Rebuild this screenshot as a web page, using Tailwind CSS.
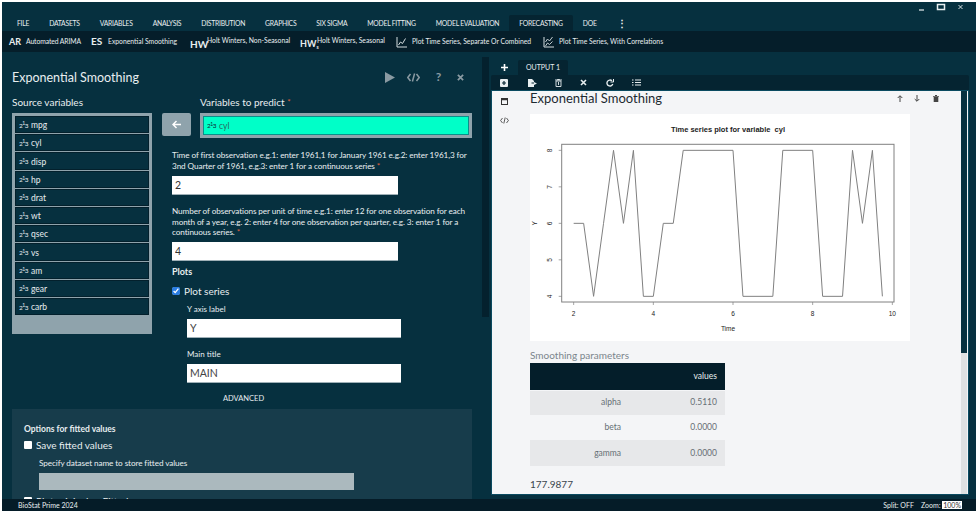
<!DOCTYPE html>
<html lang="en">
<head>
  <meta charset="UTF-8" />
  <title>BioStat Prime</title>
  <script src="https://cdn.jsdelivr.net/npm/@tailwindcss/browser@4"></script>
</head>
<body class="bg-white w-[976px] h-[513px] overflow-hidden font-['Lato','Noto_Sans',sans-serif]">
<div class="ml-[2px] mt-[2px] h-[509px] w-[974px] flex flex-col bg-[#06303f] text-[#e8eef0]">

  <!-- window controls -->
  <div class="h-[13px] flex justify-end items-start">
    <svg class="w-[60px] h-[13px]" viewBox="0 0 60 13" fill="none" stroke="#e8eef0">
      <path d="M3 8h5" stroke-width="1.2"/>
      <rect x="21.5" y="2.5" width="7" height="5" stroke-width="1.5"/>
      <path d="M42.5 3l4 4M46.5 3l-4 4" stroke-width="0.9"/>
    </svg>
  </div>

  <!-- menu -->
  <div class="h-[16px] flex pl-[5px] text-[6.8px] tracking-[-0.25px] uppercase items-stretch">
    <div class="px-[10px] flex items-center">File</div>
    <div class="px-[10px] flex items-center">Datasets</div>
    <div class="px-[10px] flex items-center">Variables</div>
    <div class="px-[10px] flex items-center">Analysis</div>
    <div class="px-[10px] flex items-center">Distribution</div>
    <div class="px-[10px] flex items-center">Graphics</div>
    <div class="px-[10px] flex items-center">Six Sigma</div>
    <div class="px-[10px] flex items-center">Model Fitting</div>
    <div class="px-[10px] flex items-center">Model Evaluation</div>
    <div class="px-[10px] flex items-center bg-[#052431] rounded-t-[2px]">Forecasting</div>
    <div class="px-[10px] flex items-center">DOE</div>
    <div class="px-[10px] flex items-center font-bold text-[10px]">⋮</div>
  </div>

  <!-- ribbon -->
  <div class="h-[21px] bg-[#051e2a] flex items-center pl-[7px] text-[6.8px] whitespace-nowrap">
    <b class="text-[9px] w-[17px]">AR</b>
    <span class="w-[65px] tracking-[-0.1px]">Automated ARIMA</span>
    <b class="text-[10px] w-[17px]">ES</b>
    <span class="w-[82px]">Exponential Smoothing</span>
    <b class="text-[10px] w-[17px] mt-[5px]">HW</b>
    <span class="w-[93px] mb-[2px]">Holt Winters, Non-Seasonal</span>
    <b class="text-[9px] w-[17px] mt-[5px]">HW<sub class="text-[5px]">s</sub></b>
    <span class="w-[79px] mb-[2px]">Holt Winters, Seasonal</span>
    <svg class="w-[11px] h-[12px] mr-[5px]" viewBox="0 0 11 12" fill="none" stroke="#d5dde0"><path d="M1 1v10h10" stroke-width="1"/><path d="M2.5 9l2-3 2 1.5 3-5" stroke-width="1"/></svg>
    <span class="w-[131px]">Plot Time Series, Separate Or Combined</span>
    <svg class="w-[11px] h-[12px] mr-[5px]" viewBox="0 0 11 12" fill="none" stroke="#d5dde0"><path d="M1 1v10h10" stroke-width="1"/><path d="M2.5 6l2-3 2 2 3-4M2.5 10l2-3 2 1.5 3-3" stroke-width="0.9"/></svg>
    <span>Plot Time Series, With Correlations</span>
  </div>

  <!-- main -->
  <div class="flex-1 flex min-h-0">

    <!-- left pane -->
    <div class="w-[480px] shrink-0 overflow-hidden pl-[10px] pt-[16px]">
      <div class="flex items-center w-[455px] h-[18px]">
        <h1 class="text-[12.5px] leading-[18px] pt-[1px]">Exponential Smoothing</h1>
        <div class="ml-auto flex items-center text-[#8a9aa2] pr-[3px]">
          <svg class="w-[10px] h-[11px]" viewBox="0 0 10 11" fill="currentColor"><path d="M0 0l10 5.5L0 11z"/></svg>
          <svg class="ml-[12px] w-[13px] h-[9px]" viewBox="0 0 13 9" fill="none" stroke="currentColor" stroke-width="1.5"><path d="M3.5 1L.8 4.5 3.5 8M9.5 1l2.7 3.5L9.5 8M7.6.5L5.4 8.5"/></svg>
          <span class="ml-[15px] text-[12px] font-bold leading-none w-[7px] text-center">?</span>
          <svg class="ml-[15px] w-[7px] h-[7px]" viewBox="0 0 8 8" fill="none" stroke="currentColor" stroke-width="2"><path d="M1 1l6 6M7 1L1 7"/></svg>
        </div>
      </div>

      <div class="flex mt-[10px]">
        <!-- source list -->
        <div class="w-[140px] shrink-0">
          <div class="text-[10px] h-[13px] leading-[13px]">Source variables</div>
          <div class="mt-[4px] h-[221px] bg-[#8fa3ac] p-[3px] flex flex-col gap-[1px] text-[8.5px]">
            <div class="h-[17.2px] shrink-0 bg-[#06303f] border border-[#03202c] flex items-center pl-[3px] pt-[2px]"><span class="text-[6.5px] tracking-[-0.5px] mr-[3px]">2<sup class="text-[5px]">1</sup>3</span>mpg</div>
            <div class="h-[17.2px] shrink-0 bg-[#06303f] border border-[#03202c] flex items-center pl-[3px] pt-[2px]"><span class="text-[6.5px] tracking-[-0.5px] mr-[3px]">2<sup class="text-[5px]">1</sup>3</span>cyl</div>
            <div class="h-[17.2px] shrink-0 bg-[#06303f] border border-[#03202c] flex items-center pl-[3px] pt-[2px]"><span class="text-[6.5px] tracking-[-0.5px] mr-[3px]">2<sup class="text-[5px]">1</sup>3</span>disp</div>
            <div class="h-[17.2px] shrink-0 bg-[#06303f] border border-[#03202c] flex items-center pl-[3px] pt-[2px]"><span class="text-[6.5px] tracking-[-0.5px] mr-[3px]">2<sup class="text-[5px]">1</sup>3</span>hp</div>
            <div class="h-[17.2px] shrink-0 bg-[#06303f] border border-[#03202c] flex items-center pl-[3px] pt-[2px]"><span class="text-[6.5px] tracking-[-0.5px] mr-[3px]">2<sup class="text-[5px]">1</sup>3</span>drat</div>
            <div class="h-[17.2px] shrink-0 bg-[#06303f] border border-[#03202c] flex items-center pl-[3px] pt-[2px]"><span class="text-[6.5px] tracking-[-0.5px] mr-[3px]">2<sup class="text-[5px]">1</sup>3</span>wt</div>
            <div class="h-[17.2px] shrink-0 bg-[#06303f] border border-[#03202c] flex items-center pl-[3px] pt-[2px]"><span class="text-[6.5px] tracking-[-0.5px] mr-[3px]">2<sup class="text-[5px]">1</sup>3</span>qsec</div>
            <div class="h-[17.2px] shrink-0 bg-[#06303f] border border-[#03202c] flex items-center pl-[3px] pt-[2px]"><span class="text-[6.5px] tracking-[-0.5px] mr-[3px]">2<sup class="text-[5px]">1</sup>3</span>vs</div>
            <div class="h-[17.2px] shrink-0 bg-[#06303f] border border-[#03202c] flex items-center pl-[3px] pt-[2px]"><span class="text-[6.5px] tracking-[-0.5px] mr-[3px]">2<sup class="text-[5px]">1</sup>3</span>am</div>
            <div class="h-[17.2px] shrink-0 bg-[#06303f] border border-[#03202c] flex items-center pl-[3px] pt-[2px]"><span class="text-[6.5px] tracking-[-0.5px] mr-[3px]">2<sup class="text-[5px]">1</sup>3</span>gear</div>
            <div class="h-[17.2px] shrink-0 bg-[#06303f] border border-[#03202c] flex items-center pl-[3px] pt-[2px]"><span class="text-[6.5px] tracking-[-0.5px] mr-[3px]">2<sup class="text-[5px]">1</sup>3</span>carb</div>
          </div>
        </div>

        <!-- right column: arrow + target, then the form -->
        <div class="ml-[10px] w-[310px] shrink-0">
          <div class="flex">
            <div class="w-[29px] shrink-0 pt-[17px]">
              <div class="h-[23px] bg-[#8fa3ac] rounded-[2px] flex items-center justify-center">
                <svg class="w-[9px] h-[9px]" viewBox="0 0 9 9" fill="none" stroke="#fff" stroke-width="1.5"><path d="M9 4.5H1M4.5 1L1 4.5 4.5 8"/></svg>
              </div>
            </div>
            <div class="ml-[9px] w-[272px] shrink-0">
              <div class="text-[10px] h-[13px] leading-[13px]">Variables to predict <span class="text-[#e0603a] text-[8px] align-top">*</span></div>
              <div class="mt-[4px] h-[25px] bg-[#8fa3ac] p-[3px]">
                <div class="h-[19px] bg-[#00ffc8] border border-[#0a8f8a] flex items-center pl-[3px] pt-[1px] text-[8.5px] text-[#2a6a60]"><span class="text-[6.5px] tracking-[-0.5px] mr-[3px] text-[#123]">2<sup class="text-[5px]">1</sup>3</span>cyl</div>
              </div>
            </div>
          </div>

          <div class="pl-[10px] text-[8.2px] tracking-[-0.1px] leading-[10.5px]">
            <p class="mt-[12px] w-[298px] h-[21px]">Time of first observation e.g.1: enter 1961,1 for January 1961 e.g.2: enter 1961,3 for 3nd Quarter of 1961, e.g.3: enter 1 for a continuous series <span class="text-[#e0603a]">*</span></p>
            <input class="block mt-[5px] w-[226px] h-[19px] bg-white text-[#333] text-[10.5px] px-[3px] border-b border-[#9fb0b7]" value="2" />
            <p class="mt-[11px] w-[298px] h-[32px]">Number of observations per unit of time e.g.1: enter 12 for one observation for each month of a year, e.g. 2: enter 4 for one observation per quarter, e.g. 3: enter 1 for a continuous series. <span class="text-[#e0603a]">*</span></p>
            <input class="block mt-[4px] w-[226px] h-[19px] bg-white text-[#333] text-[10.5px] px-[3px] border-b border-[#9fb0b7]" value="4" />
            <div class="mt-[5px] font-bold text-[9px] tracking-normal h-[12px] leading-[12px]">Plots</div>
            <label class="mt-[7px] flex items-center h-[12px] text-[10px] tracking-normal"><input type="checkbox" checked class="w-[8px] h-[8px] mr-[4px] accent-[#2a7de1]" />Plot series</label>
            <div class="ml-[15px] mt-[7px] w-[214px] text-[8px] tracking-normal">
              <div class="h-[11px] leading-[11px]">Y axis label</div>
              <input class="block mt-[4px] w-[214px] h-[19px] bg-white text-[#444] text-[10.5px] px-[3px] border-b border-[#9fb0b7]" value="Y" />
              <div class="h-[11px] leading-[11px] mt-[11px]">Main title</div>
              <input class="block mt-[4px] w-[214px] h-[19px] bg-white text-[#444] text-[10.5px] px-[3px] border-b border-[#9fb0b7]" value="MAIN" />
            </div>
            <div class="ml-[51px] mt-[11px] text-[7.5px] tracking-normal h-[10px] leading-[10px]">ADVANCED</div>
          </div>
        </div>
      </div>

      <!-- advanced section -->
      <div class="mt-[5px] w-[460px] h-[100px] bg-[#173c4b] pl-[12px] pt-[13.7px] overflow-hidden">
        <div class="font-bold text-[8.5px] h-[12px] leading-[12px]">Options for fitted values</div>
        <label class="mt-[4px] flex items-center h-[13px] text-[10px]"><span class="w-[8px] h-[8px] bg-white mr-[4px] rounded-[1px]"></span>Save fitted values</label>
        <div class="ml-[15px] mt-[6px] text-[8.2px] tracking-[-0.1px] h-[11px] leading-[11px]">Specify dataset name to store fitted values</div>
        <div class="ml-[15px] mt-[4px] w-[315px] h-[17px] bg-[#abb9be]"></div>
        <label class="mt-[5px] flex items-center h-[13px] text-[10px]"><span class="w-[8px] h-[8px] bg-white mr-[4px] rounded-[1px]"></span>Plot original vs Fitted</label>
      </div>
    </div>

    <!-- left scrollbar -->
    <div class="w-[7px] shrink-0 pt-[5px]"><div class="h-[260px] bg-[#04212e]"></div></div>

    <!-- output pane -->
    <div class="w-[478px] ml-[2px] shrink-0 flex flex-col pb-[4px]">
      <div class="h-[23px] flex items-end">
        <div class="w-[27px] h-[16px] flex items-center justify-center text-white">
          <svg class="w-[7px] h-[7px]" viewBox="0 0 7 7" fill="none" stroke="currentColor" stroke-width="1.6"><path d="M3.5 0v7M0 3.5h7"/></svg>
        </div>
        <div class="w-[50px] h-[15px] bg-[#052431] rounded-t-[2px] flex items-center justify-center text-[7px] uppercase">Output 1</div>
      </div>
      <div class="h-[15px] bg-[#052431] rounded-t-[2px] flex items-center text-[#e8eef0]">
        <svg class="ml-[9px] w-[8px] h-[8px]" viewBox="0 0 8 8"><rect width="8" height="8" rx="1" fill="currentColor"/><path d="M4 2v4M2 4h4" stroke="#052431" stroke-width="1.2"/></svg>
        <svg class="ml-[20px] w-[9px] h-[8px]" viewBox="0 0 9 8" fill="currentColor"><path d="M0 0h4l2 2v1.5H3.5v1H6V8H0zM6 3l3 1.5L6 6z"/></svg>
        <svg class="ml-[18px] w-[7px] h-[8px]" viewBox="0 0 7 8" fill="none" stroke="currentColor"><path d="M1 2h5v5.5H1zM0 1h7M2.5 1V.5h2V1M3.5 3v3" stroke-width="0.9"/></svg>
        <svg class="ml-[18px] w-[7px] h-[7px]" viewBox="0 0 7 7" fill="none" stroke="currentColor" stroke-width="1.6"><path d="M1 1l5 5M6 1L1 6"/></svg>
        <svg class="ml-[19px] w-[8px] h-[8px]" viewBox="0 0 8 8" fill="none" stroke="currentColor" stroke-width="1.3"><path d="M6.8 5A3 3 0 1 1 6 1.8"/><path d="M7.5 0v3h-3" stroke-width="1"/></svg>
        <svg class="ml-[18px] w-[9px] h-[7px]" viewBox="0 0 9 7" fill="none" stroke="currentColor"><path d="M0 1h1.5M3 1h6M0 3.5h1.5M3 3.5h6M0 6h1.5M3 6h6"/></svg>
      </div>

      <div class="flex-1 min-h-0 flex border border-[#0a4a60] bg-[#f4f5f7] overflow-hidden">
        <!-- rail -->
        <div class="w-[38px] shrink-0 flex flex-col items-center pr-[14px] pt-[7px] text-[#333] gap-[12px]">
          <svg class="w-[7px] h-[7px]" viewBox="0 0 7 7" fill="none" stroke="currentColor"><rect x=".5" y=".5" width="6" height="6"/><path d="M0 1.5h7" stroke-width="1.5"/></svg>
          <svg class="w-[9px] h-[7px]" viewBox="0 0 9 7" fill="none" stroke="currentColor" stroke-width="0.8"><path d="M2.5 1L.6 3.5 2.5 6M6.5 1l1.9 2.5L6.5 6M5.2.5L3.8 6.5"/></svg>
        </div>
        <!-- body -->
        <div class="flex-1 min-w-0 text-[#39454c]">
          <div class="flex items-center justify-between h-[15px] w-[409px]">
            <h2 class="text-[13px] leading-[15px] text-[#1e2a31]">Exponential Smoothing</h2>
            <div class="flex items-center gap-[11px] text-[#444]">
              <svg class="w-[6px] h-[7px]" viewBox="0 0 6 7" fill="none" stroke="currentColor"><path d="M3 7V1M.7 3L3 .7 5.3 3"/></svg>
              <svg class="w-[6px] h-[7px]" viewBox="0 0 6 7" fill="none" stroke="currentColor"><path d="M3 0v6M.7 4L3 6.3 5.3 4"/></svg>
              <svg class="ml-[2px] w-[6px] h-[7px]" viewBox="0 0 6 7" fill="currentColor"><path d="M0 1h6v.7H0zM2 0h2v1H2zM.7 2h4.6v5H.7z"/></svg>
            </div>
          </div>

          <!-- plot -->
          <svg class="block mt-[8px] w-[380px] h-[227px] bg-white" viewBox="0 0 380 227" font-family="Liberation Sans, Arial, sans-serif" fill="#222">
            <text x="198" y="18" font-size="7.5" font-weight="bold" text-anchor="middle" xml:space="preserve">Time series plot for variable  cyl</text>
            <rect x="31.7" y="30.3" width="332.3" height="157.7" fill="none" stroke="#808080" stroke-width="1"/>
            <polyline fill="none" stroke="#808080" stroke-width="1" points="43.67,109.33 53.63,109.33 63.59,182.33 73.54,109.33 83.5,36.33 93.46,109.33 103.42,36.33 113.38,182.33 123.33,182.33 133.29,109.33 143.25,109.33 153.21,36.33 203,36.33 212.96,182.33 242.83,182.33 252.79,36.33 282.67,36.33 292.63,182.33 312.54,182.33 322.5,36.33 332.46,109.33 342.42,36.33 352.38,182.33"/>
            <g stroke="#808080" stroke-width="0.7">
              <path d="M43.67 188v3M123.33 188v3M203 188v3M282.67 188v3M362.33 188v3"/>
              <path d="M31.7 36.33h-3M31.7 72.83h-3M31.7 109.33h-3M31.7 145.83h-3M31.7 182.33h-3"/>
            </g>
            <g font-size="6.5" text-anchor="middle">
              <text x="43.67" y="202">2</text><text x="123.33" y="202">4</text><text x="203" y="202">6</text><text x="282.67" y="202">8</text><text x="362.33" y="202">10</text>
              <text x="198" y="217">Time</text>
              <text transform="translate(22 36.33) rotate(-90)">8</text>
              <text transform="translate(22 72.83) rotate(-90)">7</text>
              <text transform="translate(22 109.33) rotate(-90)">6</text>
              <text transform="translate(22 145.83) rotate(-90)">5</text>
              <text transform="translate(22 182.33) rotate(-90)">4</text>
              <text transform="translate(7 109.33) rotate(-90)">Y</text>
            </g>
          </svg>

          <div class="mt-[8px] text-[10px] h-[13px] leading-[13px] text-[#7b858c]">Smoothing parameters</div>
          <table class="mt-[1px] w-[195px] text-[8.5px] border-collapse">
            <thead><tr class="h-[27px] bg-[#041e2a] text-[#e8eef0]"><th></th><th class="font-normal text-right pr-[8px]">values</th></tr></thead>
            <tbody class="text-[#666f75]">
              <tr class="h-[25px] bg-[#e7e8ea] border-t border-[#f4f5f7]"><td class="w-[91px] text-right">alpha</td><td class="text-right pr-[8px]">0.5110</td></tr>
              <tr class="h-[25px]"><td class="text-right">beta</td><td class="text-right pr-[8px]">0.0000</td></tr>
              <tr class="h-[26px] bg-[#e7e8ea]"><td class="text-right">gamma</td><td class="text-right pr-[8px]">0.0000</td></tr>
            </tbody>
          </table>
          <div class="mt-[12px] text-[10px] leading-[13px]">177.9877</div>
        </div>
        <!-- scrollbar -->
        <div class="w-[6px] mr-[1px] shrink-0 bg-[#dfe1e2]"><div class="h-[262px] bg-[#06303f]"></div></div>
      </div>
    </div>
  </div>

  <!-- status bar -->
  <div class="h-[12px] bg-[#051c28] flex items-center justify-between pl-[16px] pr-[14px] text-[7px]">
    <span>BioStat Prime 2024</span>
    <div class="flex items-center gap-[7px]"><span>Split: OFF</span><span>Zoom: <span class="bg-white text-[#333] px-[1px]">100%</span></span></div>
  </div>
</div>
</body>
</html>
